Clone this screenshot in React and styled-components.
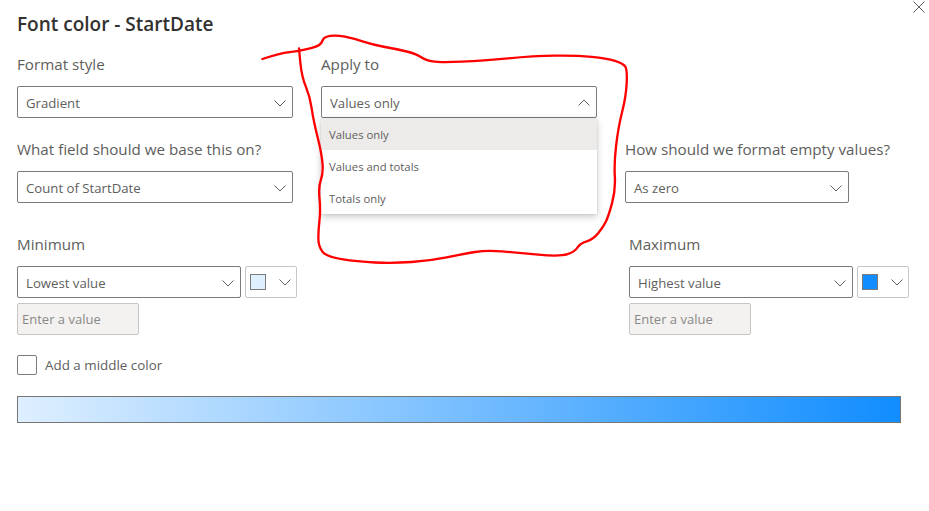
import React from 'react';
import styled, { createGlobalStyle } from 'styled-components';

const GlobalStyle = createGlobalStyle`
  html, body {
    margin: 0;
    padding: 0;
    background: #fff;
  }
  body {
    font-family: "Open Sans", "Noto Sans", "Liberation Sans", sans-serif;
    color: #605e5c;
  }
`;

const Dialog = styled.div`
  position: relative;
  width: 929px;
  height: 511px;
  overflow: hidden;
  background: #fff;
`;

const Header = styled.header`
  display: flex;
  justify-content: space-between;
  align-items: flex-start;
  height: 44px;
  padding-left: 17px;
  padding-right: 4px;
`;

const Title = styled.h1`
  margin: 12px 0 0;
  font-size: 19px;
  line-height: 25px;
  font-weight: 600;
  color: #323130;
`;

const CloseButton = styled.button`
  display: flex;
  width: 12px;
  height: 12px;
  margin-top: 1px;
  padding: 0;
  border: 0;
  background: none;
  color: #605e5c;
`;

const Body = styled.div`
  padding-left: 17px;
`;

const TopGrid = styled.div`
  display: grid;
  grid-template-columns: 276px 276px 224px;
  column-gap: 28px;
`;

const Column = styled.div`
  display: flex;
  flex-direction: column;
`;

const Field = styled.div`
  display: flex;
  flex-direction: column;
  height: 85px;
`;

const Label = styled.label`
  height: 42px;
  padding-top: 10px;
  box-sizing: border-box;
  font-size: 15.2px;
  line-height: 20px;
  white-space: nowrap;
  color: #605e5c;
`;

const Select = styled.div`
  display: flex;
  align-items: center;
  justify-content: space-between;
  box-sizing: border-box;
  width: ${p => p.$width || '100%'};
  height: 32px;
  padding: 1px 6px 0 8px;
  border: 1px solid #7d7b79;
  border-radius: 2px;
  font-size: 13.2px;
  color: #605e5c;
  background: #fff;
`;

const MenuAnchor = styled.div`
  position: relative;
`;

const Menu = styled.ul`
  position: absolute;
  top: 32px;
  left: 0;
  right: 0;
  margin: 0;
  padding: 0;
  list-style: none;
  background: #fff;
  box-shadow: 0 3px 7px rgba(0, 0, 0, 0.2), 0 0 2px rgba(0, 0, 0, 0.12);
  z-index: 2;
`;

const MenuItem = styled.li`
  display: flex;
  align-items: center;
  height: 32px;
  padding-left: 8px;
  font-size: 11.3px;
  color: #605e5c;
  background: ${p => (p.$selected ? '#edebe9' : 'transparent')};
`;

const RangeGrid = styled.div`
  display: grid;
  grid-template-columns: 612px 280px;
  margin-top: 10px;
`;

const RangeRow = styled.div`
  display: flex;
  gap: 4px;
`;

const ColorButton = styled.div`
  display: flex;
  align-items: center;
  justify-content: space-between;
  box-sizing: border-box;
  width: 52px;
  height: 32px;
  padding: 0 5px 0 4px;
  border: 1px solid #c8c6c4;
  border-radius: 2px;
`;

const Swatch = styled.span`
  box-sizing: border-box;
  width: 16px;
  height: 16px;
  border: 1px solid #7d7b79;
  background: ${p => p.$color};
`;

const ValueInput = styled.div`
  display: flex;
  align-items: center;
  box-sizing: border-box;
  width: 122px;
  height: 32px;
  margin-top: 5px;
  padding-left: 4px;
  border: 1px solid #c8c6c4;
  border-radius: 2px;
  background: #f3f2f1;
  font-size: 13px;
  color: #8a8886;
`;

const CheckRow = styled.div`
  display: flex;
  align-items: center;
  gap: 8px;
  margin-top: 20px;
`;

const CheckBox = styled.span`
  box-sizing: border-box;
  width: 20px;
  height: 20px;
  border: 1px solid #7d7b79;
  border-radius: 2px;
`;

const CheckLabel = styled.span`
  font-size: 13.4px;
  color: #605e5c;
`;

const GradientBar = styled.div`
  box-sizing: border-box;
  width: 884px;
  height: 27px;
  margin-top: 21px;
  border: 1px solid #767676;
  background: linear-gradient(to right, #deefff, #118dff);
`;

const Scribble = styled.svg`
  position: absolute;
  left: 250px;
  top: 30px;
  width: 390px;
  height: 240px;
  pointer-events: none;
  z-index: 3;
`;

const Chevron = ({ up }) => (
  <svg width="12" height="12" viewBox="0 0 12 12" fill="none" stroke="#605e5c" strokeWidth="1">
    <path d={up ? 'M0.5 8.5 L6 3 L11.5 8.5' : 'M0.5 3.5 L6 9 L11.5 3.5'} />
  </svg>
);

// red marker line, traced in 3x coordinates of the area it covers
const scribblePoints = [
  [37, 87], [90, 70], [147, 63], [200, 50], [215, 40], [222, 20], [260, 15], [310, 25],
  [370, 45], [440, 57], [500, 72], [525, 90], [570, 98], [700, 92], [850, 78], [980, 76],
  [1070, 85], [1120, 100], [1132, 120], [1128, 200], [1105, 290], [1092, 400], [1097, 480],
  [1075, 560], [1060, 590], [1030, 628], [990, 640], [975, 665], [930, 680], [800, 668],
  [710, 660], [640, 672], [540, 692], [430, 700], [320, 695], [230, 680], [205, 650],
  [205, 600], [212, 540], [205, 470], [220, 430], [215, 370], [190, 270], [180, 200],
  [155, 140], [147, 55],
];

const smoothPath = pts => {
  let d = `M${pts[0][0]} ${pts[0][1]}`;
  for (let i = 1; i < pts.length - 1; i++) {
    const mx = (pts[i][0] + pts[i + 1][0]) / 2;
    const my = (pts[i][1] + pts[i + 1][1]) / 2;
    d += ` Q${pts[i][0]} ${pts[i][1]} ${mx} ${my}`;
  }
  const last = pts[pts.length - 1];
  return `${d} L${last[0]} ${last[1]}`;
};

const menuItems = ['Values only', 'Values and totals', 'Totals only'];

const App = () => (
  <Dialog>
    <GlobalStyle />
    <Header>
      <Title>Font color - StartDate</Title>
      <CloseButton aria-label="Close">
        <svg width="12" height="12" viewBox="0 0 12 12" stroke="currentColor" strokeWidth="1">
          <path d="M0.5 0.5 L11.5 11.5 M11.5 0.5 L0.5 11.5" />
        </svg>
      </CloseButton>
    </Header>
    <Body>
      <TopGrid>
        <Column>
          <Field>
            <Label>Format style</Label>
            <Select>Gradient<Chevron /></Select>
          </Field>
          <Field>
            <Label>What field should we base this on?</Label>
            <Select>Count of StartDate<Chevron /></Select>
          </Field>
        </Column>
        <Column>
          <Field>
            <Label>Apply to</Label>
            <MenuAnchor>
              <Select>Values only<Chevron up /></Select>
              <Menu>
                {menuItems.map((item, i) => (
                  <MenuItem key={item} $selected={i === 0}>{item}</MenuItem>
                ))}
              </Menu>
            </MenuAnchor>
          </Field>
        </Column>
        <Column>
          <Field />
          <Field>
            <Label>How should we format empty values?</Label>
            <Select>As zero<Chevron /></Select>
          </Field>
        </Column>
      </TopGrid>
      <RangeGrid>
        <Column>
          <Label>Minimum</Label>
          <RangeRow>
            <Select $width="224px">Lowest value<Chevron /></Select>
            <ColorButton><Swatch $color="#deefff" /><Chevron /></ColorButton>
          </RangeRow>
          <ValueInput>Enter a value</ValueInput>
        </Column>
        <Column>
          <Label>Maximum</Label>
          <RangeRow>
            <Select $width="224px">Highest value<Chevron /></Select>
            <ColorButton><Swatch $color="#118dff" /><Chevron /></ColorButton>
          </RangeRow>
          <ValueInput>Enter a value</ValueInput>
        </Column>
      </RangeGrid>
      <CheckRow>
        <CheckBox />
        <CheckLabel>Add a middle color</CheckLabel>
      </CheckRow>
      <GradientBar />
    </Body>
    <Scribble viewBox="0 0 1170 720" fill="none" stroke="#ff0000" strokeWidth="7" strokeLinecap="round">
      <path d={smoothPath(scribblePoints)} />
    </Scribble>
  </Dialog>
);

export default App;
